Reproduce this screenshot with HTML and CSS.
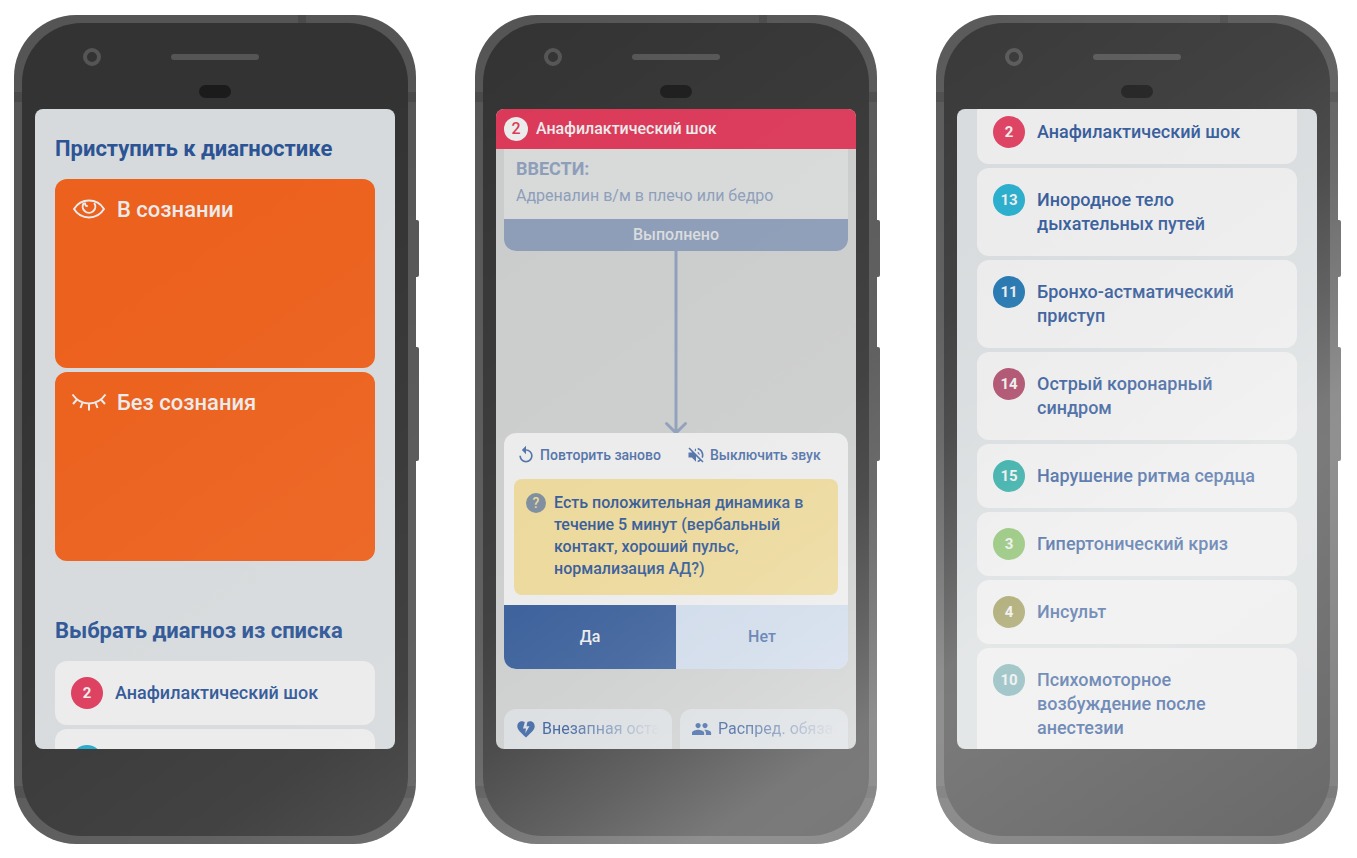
FILE: index.html
```html
<!DOCTYPE html>
<html lang="ru">
<head>
<meta charset="utf-8">
<meta name="viewport" content="width=device-width, initial-scale=1">
<title>Анафилактический шок</title>
<link rel="stylesheet" href="styles.css">
</head>
<body>
<main class="stage">

  <section class="phone">
    <span class="side-key side-key-power"></span>
    <span class="side-key side-key-volume"></span>
    <div class="face">
      <div class="sensors"><span class="camera"></span><span class="speaker"></span><span class="proximity"></span></div>
      <div class="screen screen-home">
        <h2 class="title">Приступить к диагностике</h2>
        <div class="stack">
          <button class="state" type="button">
            <svg class="state-icon" viewBox="0 0 36 24" aria-hidden="true"><path d="M3 11C10 -.2 26 -.2 33 11C26 22.200 10 22.200 3 11Z"/><path d="M12.800 5A6.300 6.300 0 1 0 23.200 5"/><path d="M14.200 4.500c-.8 2.500 1 4 2.600 3.200"/></svg>
            В сознании
          </button>
          <button class="state" type="button">
            <svg class="state-icon" viewBox="0 0 36 24" aria-hidden="true"><path d="M1.500 3.500C10 15.500 26 15.500 34.500 3.500M6 8.500l-4 4.500M11.500 11.500l-2 5.500M18 12.500v7M24.500 11.500l2 5.500M30 8.500l4 4.500"/></svg>
            Без сознания
          </button>
        </div>
        <h2 class="title title-list">Выбрать диагноз из списка</h2>
        <ul class="stack">
          <li><a class="item" href="#shock"><span class="num crimson">2</span><span class="item-text">Анафилактический шок</span></a></li>
          <li><a class="item" href="#airway"><span class="num cyan">13</span><span class="item-text">Инородное тело дыхательных путей</span></a></li>
        </ul>
      </div>
    </div>
  </section>

  <section class="phone">
    <span class="side-key side-key-power"></span>
    <span class="side-key side-key-volume"></span>
    <div class="face">
      <div class="sensors"><span class="camera"></span><span class="speaker"></span><span class="proximity"></span></div>
      <div class="screen screen-guide">
        <header class="bar"><span class="bar-num">2</span><h1 class="bar-title">Анафилактический шок</h1></header>
        <div class="guide">
          <article class="done">
            <div class="done-body">
              <h3 class="done-title">ВВЕСТИ:</h3>
              <p class="done-text">Адреналин в/м в плечо или бедро</p>
            </div>
            <button class="done-button" type="button">Выполнено</button>
          </article>
          <svg class="arrow" viewBox="0 0 24 182" aria-hidden="true"><path d="M12 0V180M2.500 172.500L12 182L21.500 172.500"/></svg>
          <article class="step">
            <div class="tools">
              <button class="tool" type="button">
                <svg class="tool-icon" viewBox="0 0 24 24" aria-hidden="true"><path d="M12 5V1L7 6l5 5V7c3.310 0 6 2.690 6 6s-2.690 6-6 6-6-2.690-6-6H4c0 4.420 3.580 8 8 8s8-3.580 8-8-3.580-8-8-8z"/></svg>
                Повторить заново
              </button>
              <button class="tool" type="button">
                <svg class="tool-icon" viewBox="0 0 24 24" aria-hidden="true"><path d="M4.340 2.930L2.930 4.340 7.290 8.700 7 9H3v6h4l5 5v-6.590l4.180 4.180c-.65.49-1.380.88-2.180 1.110v2.060c1.340-.3 2.570-.92 3.610-1.750l2.050 2.050 1.410-1.410L4.340 2.930zM19 12c0 .82-.15 1.610-.41 2.340l1.530 1.530c.56-1.170.88-2.480.88-3.870 0-4.280-2.990-7.860-7-8.770v2.060c2.890.86 5 3.540 5 6.710zM12 4l-1.880 1.880L12 7.760zm4.500 8c0-1.770-1.020-3.290-2.500-4.030v1.790l2.480 2.480c.01-.08.02-.16.02-.24z"/></svg>
                Выключить звук
              </button>
            </div>
            <div class="question"><span class="mark">?</span><p class="question-text">Есть положительная динамика в течение 5 минут (вербальный контакт, хороший пульс, нормализация АД?)</p></div>
            <div class="answers"><button class="answer answer-yes" type="button">Да</button><button class="answer" type="button">Нет</button></div>
          </article>
          <nav class="tiles">
            <a class="tile" href="#arrest">
              <svg class="tile-icon" viewBox="0 0 20 20" aria-hidden="true"><path d="M8.800 3.200C5.800 1 1.300 2.900 1.300 7.300c0 3.200 3.200 6.200 8.700 11.300 5.500-5.100 8.700-8.100 8.700-11.300 0-4.400-4.300-6.200-7.300-4.200L10.500 7.200h3L9.200 14.200l.8-4.700H7z"/></svg>
              <span class="tile-text">Внезапная остановка</span>
            </a>
            <a class="tile" href="#roles">
              <svg class="tile-icon" viewBox="1 2 23 20" aria-hidden="true"><path d="M16 11c1.660 0 2.990-1.340 2.990-3S17.660 5 16 5s-3 1.340-3 3 1.340 3 3 3zm-8 0c1.660 0 2.990-1.340 2.990-3S9.660 5 8 5 5 6.340 5 8s1.340 3 3 3zm0 2c-2.330 0-7 1.170-7 3.500V19h14v-2.500c0-2.330-4.670-3.500-7-3.500zm8 0c-.29 0-.62.02-.97.05 1.160.84 1.970 1.970 1.970 3.450V19h6v-2.500c0-2.330-4.670-3.500-7-3.500z"/></svg>
              <span class="tile-text">Распред. обязанностей</span>
            </a>
          </nav>
        </div>
      </div>
    </div>
  </section>

  <section class="phone">
    <span class="side-key side-key-power"></span>
    <span class="side-key side-key-volume"></span>
    <div class="face">
      <div class="sensors"><span class="camera"></span><span class="speaker"></span><span class="proximity"></span></div>
      <div class="screen screen-list">
        <ul class="stack stack-scrolled">
          <li><a class="item" href="#d2"><span class="num crimson">2</span><span class="item-text">Анафилактический шок</span></a></li>
          <li><a class="item" href="#d13"><span class="num cyan">13</span><span class="item-text">Инородное тело дыхательных путей</span></a></li>
          <li><a class="item" href="#d11"><span class="num blue">11</span><span class="item-text">Бронхо-астматический приступ</span></a></li>
          <li><a class="item" href="#d14"><span class="num plum">14</span><span class="item-text">Острый коронарный синдром</span></a></li>
          <li><a class="item" href="#d15"><span class="num teal">15</span><span class="item-text">Нарушение ритма сердца</span></a></li>
          <li><a class="item" href="#d3"><span class="num green">3</span><span class="item-text">Гипертонический криз</span></a></li>
          <li><a class="item" href="#d4"><span class="num olive">4</span><span class="item-text">Инсульт</span></a></li>
          <li><a class="item" href="#d10"><span class="num mist">10</span><span class="item-text">Психомоторное возбуждение после анестезии</span></a></li>
        </ul>
      </div>
    </div>
  </section>

</main>
</body>
</html>
```

FILE: styles.css
```css
:root {
  --ink: #2c5495;
  --ink-soft: #4c6ea6;
  --paper: #ebebeb;
  --faded: #8c9cb8;
  /* one sheen of light laid across all three devices */
  --sheen: linear-gradient(145deg,
    rgba(255, 255, 255, 0) 300px,
    rgba(255, 255, 255, .04) 600px,
    rgba(255, 255, 255, .075) 800px,
    rgba(255, 255, 255, .13) 900px,
    rgba(255, 255, 255, .23) 1000px,
    rgba(255, 255, 255, .34) 1090px,
    rgba(255, 255, 255, .35) 1130px,
    rgba(255, 255, 255, .27) 1430px);
}

* { box-sizing: border-box; }

body {
  margin: 0;
  background: #fff;
  font-family: Roboto, "Noto Sans", sans-serif;
  color: var(--ink);
}

h1, h2, h3, p, ul { margin: 0; padding: 0; }
ul { list-style: none; }
a { color: inherit; text-decoration: none; }
button { border: 0; padding: 0; font: inherit; color: inherit; background: none; cursor: pointer; }

.stage {
  display: grid;
  grid-template-columns: repeat(3, minmax(0, 1fr));
  gap: 59px;
  align-items: start;
  padding: 15px 19px 14px 14px;
}

/* Device */
.phone {
  position: relative;
  padding: 8px;
  border-radius: 62px;
  background:
    linear-gradient(#4a4a4a, #4a4a4a) right 110px top / 8px 8px no-repeat,
    linear-gradient(#4a4a4a, #4a4a4a) left 0 top 77px / 100% 10px no-repeat,
    linear-gradient(#4a4a4a, #4a4a4a) left 0 bottom 46px / 100% 12px no-repeat,
    #555;
}

.phone::after {
  content: "";
  position: absolute;
  inset: 0;
  border-radius: inherit;
  background: var(--sheen) fixed;
  pointer-events: none;
}

.side-key {
  position: absolute;
  left: 100%;
  width: 3px;
  border-radius: 0 2px 2px 0;
  background: var(--sheen) fixed #555;
}
.side-key-power { top: 205px; height: 57px; }
.side-key-volume { top: 332px; height: 114px; }

.face {
  padding: 0 13px 87px;
  border-radius: 60px;
  background: #333;
}

.sensors {
  display: grid;
  grid-template-columns: 1fr 88px 1fr;
  grid-template-rows: 18px 13px;
  row-gap: 19px;
  align-items: center;
  padding: 25px 0 11px;
}
.camera {
  width: 18px;
  height: 18px;
  margin-left: 48px;
  border: 4px solid #555;
  border-radius: 50%;
}
.speaker { height: 6px; border-radius: 3px; background: #555; }
.proximity {
  grid-column: 2;
  justify-self: center;
  width: 32px;
  height: 13px;
  border-radius: 7px;
  background: #1b1b1b;
}

.screen {
  aspect-ratio: 360 / 640;
  overflow: hidden;
  border-radius: 8px;
  background: #d6dadc;
}
.screen-home { padding: 25px 20px 0; }
.screen-list { padding: 0 20px; }
.screen-guide { background: #cacccb; }

/* Home and list */
.title { margin-bottom: 15px; font-size: 22px; line-height: 30px; font-weight: 700; }
.title-list { margin-top: 55px; }
.stack { display: flex; flex-direction: column; gap: 4px; }
.stack-scrolled { margin-top: -9px; }

.state {
  display: flex;
  align-items: flex-start;
  gap: 10px;
  min-height: 189px;
  padding: 17px 16px;
  border-radius: 12px;
  background: #ec611d;
  color: #ebebeb;
  font-size: 22px;
  line-height: 28px;
  font-weight: 500;
}
.state-icon {
  width: 36px;
  height: 28px;
  fill: none;
  stroke: currentColor;
  stroke-width: 2;
}

.item {
  display: flex;
  gap: 12px;
  padding: 16px;
  border-radius: 12px;
  background: var(--paper);
}
.item-text { padding: 4px 0; font-size: 18px; line-height: 24px; font-weight: 500; }
.num {
  flex: none;
  width: 32px;
  height: 32px;
  border-radius: 50%;
  color: #ebebeb;
  font-size: 15px;
  line-height: 32px;
  font-weight: 700;
  text-align: center;
}
.crimson { background: #dc3a5b; }
.cyan { background: #1ea9ca; }
.blue { background: #1970ac; }
.plum { background: #a94463; }
.teal { background: #22a59f; }
.green { background: #82bb63; }
.olive { background: #948f48; }
.mist { background: #73aaae; }

/* Guide */
.bar {
  display: flex;
  align-items: center;
  gap: 8px;
  height: 40px;
  padding: 0 8px;
  background: #db3757;
  color: #ebebeb;
}
.bar-num {
  width: 24px;
  height: 24px;
  border-radius: 50%;
  background: #ebebeb;
  color: #db3757;
  font-size: 16px;
  line-height: 24px;
  font-weight: 500;
  text-align: center;
}
.bar-title { font-size: 16px; line-height: 24px; font-weight: 500; }

.guide { display: flex; flex-direction: column; padding: 0 8px; }
.done { overflow: hidden; border-radius: 0 0 12px 12px; background: #d6d9d8; color: var(--faded); }
.done-body { display: grid; gap: 5px; padding: 9px 12px 12px; }
.done-title { font-size: 18px; line-height: 22px; font-weight: 700; }
.done-text { font-size: 16px; line-height: 22px; }
.done-button {
  display: block;
  width: 100%;
  height: 32px;
  padding-bottom: 2px;
  background: #8b9bb6;
  color: #d9dcdd;
  font-size: 16px;
  font-weight: 500;
}
.arrow {
  align-self: center;
  width: 24px;
  height: 182px;
  fill: none;
  stroke: var(--faded);
  stroke-width: 3;
  stroke-linecap: round;
}

.step { overflow: hidden; border-radius: 12px; background: var(--paper); }
.tools { display: flex; gap: 25px; padding: 12px 12px 14px; }
.tool {
  display: flex;
  align-items: center;
  gap: 4px;
  color: var(--ink-soft);
  font-size: 14px;
  line-height: 20px;
  font-weight: 500;
}
.tool-icon { width: 20px; height: 20px; fill: currentColor; }
.question {
  display: flex;
  gap: 8px;
  margin: 0 10px 10px;
  padding: 13px 12px 15px;
  border-radius: 8px;
  background: #ebd797;
}
.mark {
  flex: none;
  width: 20px;
  height: 20px;
  margin-top: 1px;
  border-radius: 50%;
  background: #78899a;
  color: #ebd797;
  font-size: 14px;
  line-height: 20px;
  font-weight: 500;
  text-align: center;
}
.question-text { font-size: 16px; line-height: 22px; font-weight: 500; }
.answers { display: grid; grid-template-columns: 1fr 1fr; }
.answer { height: 64px; padding-bottom: 2px; background: #cdd9e9; color: var(--ink-soft); font-size: 16px; font-weight: 500; }
.answer-yes { background: #305795; color: #ebebeb; }

.tiles { display: grid; grid-template-columns: repeat(2, minmax(0, 1fr)); gap: 8px; margin-top: 40px; }
.tile {
  display: flex;
  align-items: flex-start;
  gap: 6px;
  height: 60px;
  padding: 10px 12px;
  border-radius: 12px;
  background: #d8dcdf;
}
.tile-icon { flex: none; width: 20px; height: 20px; fill: #365f9f; }
.tile-text {
  overflow: hidden;
  font-size: 16px;
  line-height: 20px;
  white-space: nowrap;
  mask-image: linear-gradient(90deg, #000 20%, transparent);
}
```
